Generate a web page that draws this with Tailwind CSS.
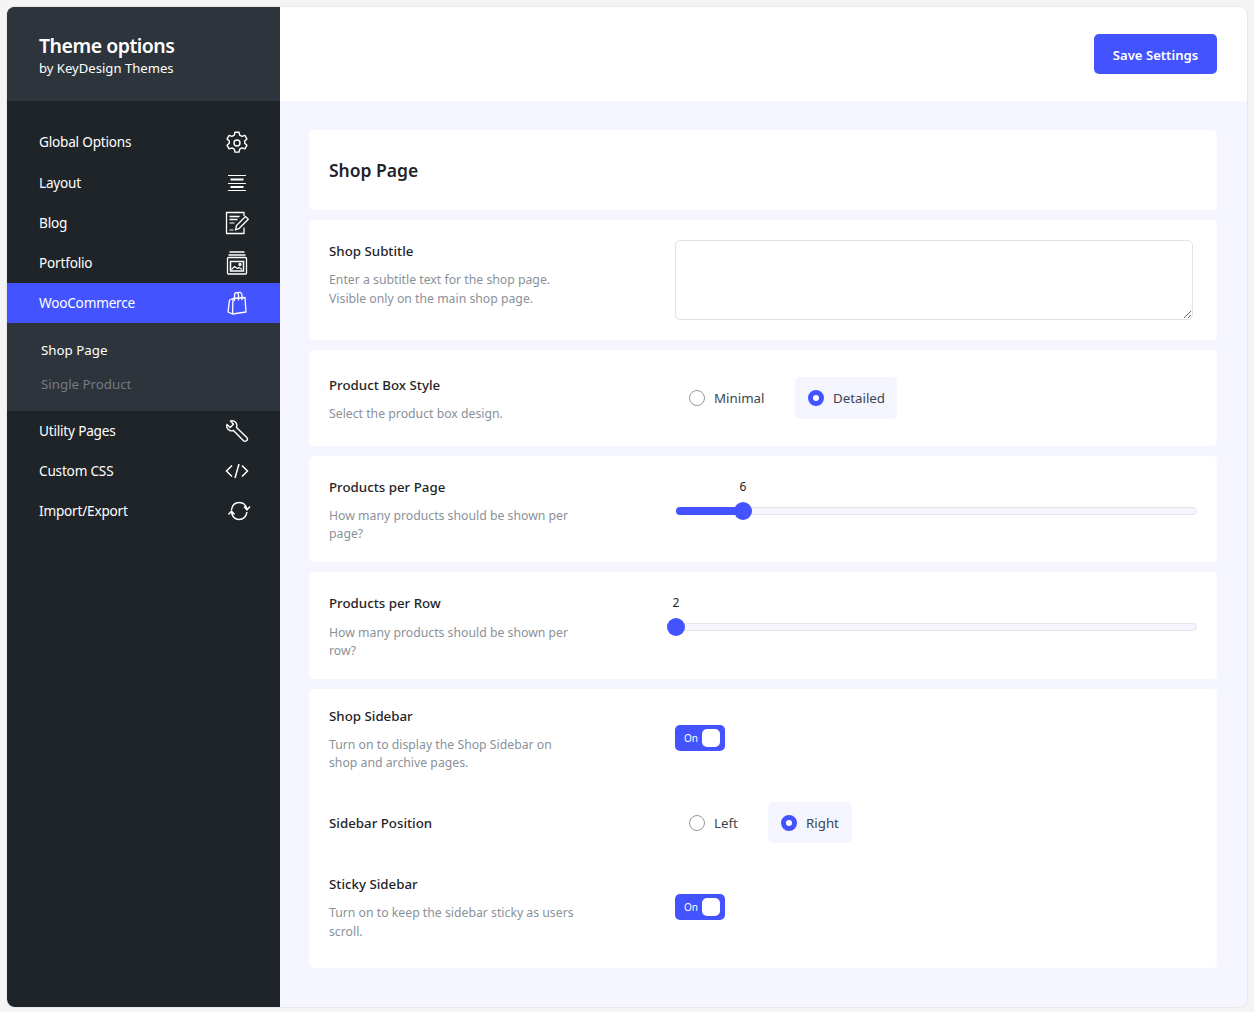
<!DOCTYPE html>
<html>
<head>
<meta charset="utf-8">
<script src="https://cdn.jsdelivr.net/npm/@tailwindcss/browser@4"></script>
</head>
<body class="bg-[#f4f4f4] font-['Noto_Sans',sans-serif]">
<div class="h-[1012px] w-[1254px] p-[7px]">
  <div class="flex h-[1000px] w-[1240px] overflow-hidden rounded-[8px] bg-white shadow-[0_0_0_1px_#e8e8e8]">
    <aside class="flex w-[273px] shrink-0 flex-col bg-[#1f2428] text-white">
      <div class="flex h-[94px] flex-col justify-center bg-[#2d343b] pl-[32px] pt-[1px]">
        <div class="text-[19.5px] font-semibold leading-[26px] tracking-[-0.5px]">Theme options</div>
        <div class="text-[13.1px] leading-[18px]">by KeyDesign Themes</div>
      </div>
      <nav class="flex flex-col pt-[21px] text-[13.6px] tracking-[-0.2px]">
        <div class="flex h-[41px] items-center justify-between pl-[32px] pr-[31px]">
          <span>Global Options</span>
          <svg class="h-6 w-6" viewBox="0 0 24 24" fill="none" stroke="#fff" stroke-width="1.4" stroke-linejoin="round"><path d="M10 1.200h4l.7 3 2.300 1.200 2.900-1 2 3.500-2.200 2.100v2.200l2.200 2.100-2 3.500-2.900-1-2.300 1.300-.7 3h-4l-.7-3-2.300-1.300-2.900 1-2-3.500 2.200-2.100v-2.200l-2.200-2.100 2-3.500 2.900 1 2.300-1.200z"/><circle cx="12" cy="12" r="3"/></svg>
        </div>
        <div class="flex h-[40px] items-center justify-between pl-[32px] pr-[31px]">
          <span>Layout</span>
          <svg class="h-6 w-6" viewBox="0 0 24 24" fill="none" stroke="#fff"><path d="M3 4.500h18M3 12.500h18M3 19.500h18" stroke-width="1.200"/><path d="M5.500 8.500h13M5.500 16h13" stroke-width="1.800"/></svg>
        </div>
        <div class="flex h-[40px] items-center justify-between pl-[32px] pr-[31px]">
          <span>Blog</span>
          <svg class="h-6 w-6" viewBox="0 0 24 24" fill="none" stroke="#fff" stroke-width="1.300" stroke-linejoin="round"><path d="M19 5V1.500H1.500v21H19v-6"/><path d="M4.500 5.500h10M4.500 8.500h8" stroke-width="1.700"/><path d="M4.500 12h5M4.500 19h4" stroke-width="1.200"/><path d="M10.500 19l1-4.500 9-9 2.800 2.800-9 9z"/></svg>
        </div>
        <div class="flex h-[40px] items-center justify-between pl-[32px] pr-[31px]">
          <span>Portfolio</span>
          <svg class="h-6 w-6" viewBox="0 0 24 24" fill="none" stroke="#fff" stroke-width="1.300"><path d="M4.500 1h15M3.500 4h17"/><rect x="2.500" y="6.500" width="19" height="16.500" rx="1"/><rect x="5.500" y="10.500" width="13" height="9.500" stroke-width="1.500"/><path d="M6.500 18.500l3-3 3 2 1.500-1 3 2" /><circle cx="15" cy="13.500" r="1"/></svg>
        </div>
        <div class="flex h-[40px] items-center justify-between bg-[#4353ff] pl-[32px] pr-[31px]">
          <span>WooCommerce</span>
          <svg class="h-6 w-6" viewBox="0 0 24 24" fill="none" stroke="#fff" stroke-width="1.300" stroke-linejoin="round"><path d="M8 7.500L20 6.500 21 21 7.500 23 3 21 4.500 9zM8 7.500L7.500 23"/><path d="M9.500 10V4.500C9.500 1 13 .5 13.500 4.500V9.500M12 2.500C14 .5 17 1 17 4.500V9"/></svg>
        </div>
        <div class="flex h-[88px] flex-col justify-center gap-[11px] bg-[#2d343b] pl-[34px] text-[13.300px] tracking-normal">
          <div class="leading-[23px]">Shop Page</div>
          <div class="leading-[23px] text-[#747b82]">Single Product</div>
        </div>
        <div class="flex h-[40px] items-center justify-between pl-[32px] pr-[31px]">
          <span>Utility Pages</span>
          <svg class="h-6 w-6" viewBox="0 0 24 24" fill="none" stroke="#fff" stroke-width="1.400" stroke-linejoin="round"><path d="M5.500 2L8.500 5.200 5.200 8.500 2 5.500C.8 9.500 4.500 13 8.500 11.500L18.500 21.800C20.500 23.500 24 20.500 21.800 18.500L11.500 8.500C13 4.500 9.500 .8 5.500 2Z"/></svg>
        </div>
        <div class="flex h-[40px] items-center justify-between pl-[32px] pr-[31px]">
          <span>Custom CSS</span>
          <svg class="h-6 w-6" viewBox="0 0 24 24" fill="none" stroke="#fff" stroke-width="1.500"><path d="M7 6.500L1.500 12 7 17.500M17 6.500l5.500 5.500-5.500 5.500M14 5l-4 14"/></svg>
        </div>
        <div class="flex h-[40px] items-center justify-between pl-[32px] pr-[31px]">
          <span>Import/Export</span>
          <svg class="h-6 w-6 translate-x-[2px]" viewBox="0 0 24 24" fill="none" stroke="#fff" stroke-width="1.400"><path d="M4.500 11C5 6 8 3.500 12.500 3.500 16 3.500 19 6 20 10.500M17 7.500L20 11 23 7.500M20 13C19 18 16 20.500 12 20.500 8.500 20.500 5.500 18 4.500 13.500M1.500 15.500L4.500 12 7.500 15.500"/></svg>
        </div>
      </nav>
    </aside>
    <main class="flex min-w-0 flex-1 flex-col bg-[#f4f5fe]">
      <header class="flex h-[94px] shrink-0 items-start justify-end bg-white pr-[30px] pt-[27px]">
        <button class="h-[40px] w-[123px] rounded-[5px] bg-[#4353ff] pt-[3px] text-[13.100px] font-semibold text-white">Save Settings</button>
      </header>
      <div class="flex flex-col gap-[10px] pl-[29px] pr-[30px] pt-[29px] text-[13px]">
        <section class="flex h-[80px] items-center rounded-[5px] bg-white pl-[20px]">
          <h1 class="text-[17.500px] font-semibold text-[#1f2428]">Shop Page</h1>
        </section>
        <section class="flex h-[120px] rounded-[5px] bg-white pl-[20px] pt-[20px]">
          <div class="w-[346px] shrink-0">
            <h2 class="text-[13.300px] font-medium leading-[22px] text-[#1f2428]">Shop Subtitle</h2>
            <p class="mt-[8px] text-[12.250px] leading-[19px] text-[#8a9199]">Enter a subtitle text for the shop page.<br>Visible only on the main shop page.</p>
          </div>
          <textarea class="h-[80px] w-[518px] rounded-[5px] border border-[#e2e2e6] bg-white"></textarea>
        </section>
        <section class="flex h-[96px] rounded-[5px] bg-white pl-[20px] pt-[24px]">
          <div class="w-[346px] shrink-0">
            <h2 class="text-[13.300px] font-medium leading-[22px] text-[#1f2428]">Product Box Style</h2>
            <p class="mt-[8px] text-[12.250px] leading-[19px] text-[#8a9199]">Select the product box design.</p>
          </div>
          <div class="mt-[3px] flex h-[42px] items-start">
            <div class="flex h-[42px] w-[120px] items-center gap-[9px] pl-[14px] text-[13.300px] text-[#3b4650]">
              <span class="h-4 w-4 rounded-full border border-[#999]"></span><span class="pt-[2px]">Minimal</span>
            </div>
            <div class="flex h-[42px] w-[102px] items-center gap-[9px] rounded-[5px] bg-[#f4f5fe] pl-[13px] text-[13.300px] text-[#3b4650]">
              <span class="h-4 w-4 rounded-full border-[5px] border-[#4353ff] bg-white"></span><span class="pt-[2px]">Detailed</span>
            </div>
          </div>
        </section>
        <section class="flex h-[106px] rounded-[5px] bg-white pl-[20px] pt-[20px]">
          <div class="w-[346px] shrink-0">
            <h2 class="text-[13.300px] font-medium leading-[22px] text-[#1f2428]">Products per Page</h2>
            <p class="mt-[9px] w-[250px] text-[12.250px] leading-[18px] text-[#8a9199]">How many products should be shown per page?</p>
          </div>
          <div class="relative h-[50px] w-[522px]">
            <span class="absolute left-[60px] top-[1px] w-[16px] text-center text-[12px] leading-[20px] text-[#1f2428]">6</span>
            <div class="absolute left-[1px] top-[31px] h-[8px] w-[521px] rounded-full border border-[#e6e6ea] bg-[#f4f5fe]"></div>
            <div class="absolute left-[1px] top-[31px] h-[8px] w-[67px] rounded-full bg-[#4353ff]"></div>
            <div class="absolute left-[59px] top-[26px] h-[18px] w-[18px] rounded-full bg-[#4353ff]"></div>
          </div>
        </section>
        <section class="flex h-[107px] rounded-[5px] bg-white pl-[20px] pt-[20px]">
          <div class="w-[346px] shrink-0">
            <h2 class="text-[13.300px] font-medium leading-[22px] text-[#1f2428]">Products per Row</h2>
            <p class="mt-[10px] w-[250px] text-[12.250px] leading-[18px] text-[#8a9199]">How many products should be shown per row?</p>
          </div>
          <div class="relative h-[50px] w-[522px]">
            <span class="absolute left-[-7px] top-[1px] w-[16px] text-center text-[12px] leading-[20px] text-[#1f2428]">2</span>
            <div class="absolute left-[1px] top-[31px] h-[8px] w-[521px] rounded-full border border-[#e6e6ea] bg-[#f4f5fe]"></div>
            <div class="absolute left-[-8px] top-[26px] h-[18px] w-[18px] rounded-full bg-[#4353ff]"></div>
          </div>
        </section>
        <section class="flex h-[279px] flex-col rounded-[5px] bg-white pl-[20px] pt-[16px]">
          <div class="flex h-[97px]">
            <div class="w-[346px] shrink-0">
              <h2 class="text-[13.300px] font-medium leading-[22px] text-[#1f2428]">Shop Sidebar</h2>
              <p class="mt-[9px] w-[250px] text-[12.250px] leading-[18px] text-[#8a9199]">Turn on to display the Shop Sidebar on shop and archive pages.</p>
            </div>
            <div class="mt-[20px] flex h-[26px] w-[50px] items-center justify-between rounded-[5px] bg-[#4353ff] pl-[9px] pr-[5px] text-[10px] text-white">On<span class="h-[18px] w-[18px] rounded-[5px] bg-white"></span></div>
          </div>
          <div class="flex h-[41px] items-center">
            <h2 class="w-[346px] shrink-0 pt-[2px] text-[13.300px] font-medium text-[#1f2428]">Sidebar Position</h2>
            <div class="flex h-[41px] w-[93px] items-center gap-[9px] pl-[14px] text-[13.300px] text-[#3b4650]">
              <span class="h-4 w-4 rounded-full border border-[#999]"></span><span class="pt-[2px]">Left</span>
            </div>
            <div class="flex h-[41px] w-[84px] items-center gap-[9px] rounded-[5px] bg-[#f4f5fe] pl-[13px] text-[13.300px] text-[#3b4650]">
              <span class="h-4 w-4 rounded-full border-[5px] border-[#4353ff] bg-white"></span><span class="pt-[2px]">Right</span>
            </div>
          </div>
          <div class="mt-[30px] flex">
            <div class="w-[346px] shrink-0">
              <h2 class="text-[13.300px] font-medium leading-[22px] text-[#1f2428]">Sticky Sidebar</h2>
              <p class="mt-[8px] w-[250px] text-[12.250px] leading-[19px] text-[#8a9199]">Turn on to keep the sidebar sticky as users scroll.</p>
            </div>
            <div class="mt-[21px] flex h-[26px] w-[50px] items-center justify-between rounded-[5px] bg-[#4353ff] pl-[9px] pr-[5px] text-[10px] text-white">On<span class="h-[18px] w-[18px] rounded-[5px] bg-white"></span></div>
          </div>
        </section>
      </div>
    </main>
  </div>
</div>
</body>
</html>
